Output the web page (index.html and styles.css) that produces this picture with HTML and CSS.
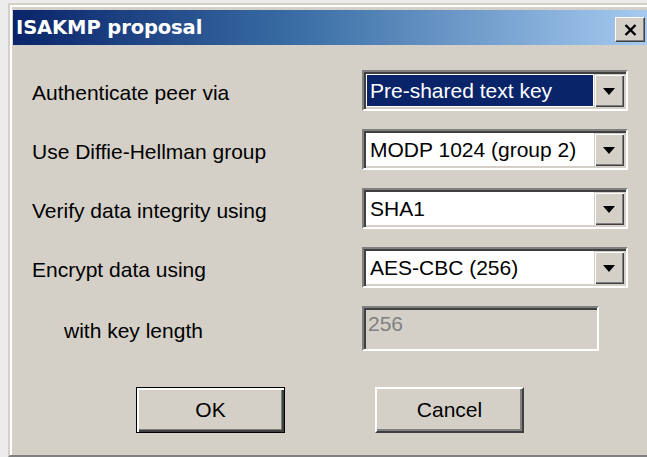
FILE: index.html
```html
<!DOCTYPE html>
<html lang="en">
<head>
<meta charset="utf-8">
<title>ISAKMP proposal</title>
<link rel="stylesheet" href="styles.css">
</head>
<body>
<div class="window">
  <div class="titlebar">
    <span class="title">ISAKMP proposal</span>
    <button class="close" type="button" aria-label="Close">
      <svg width="13" height="12" viewBox="0 0 13 12"><path d="M1.5 1 L11.5 11 M11.5 1 L1.5 11" stroke="#000" stroke-width="2.4" fill="none"/></svg>
    </button>
  </div>
  <div class="content">
    <div class="form">
      <div class="lbl">Authenticate peer via</div>
      <div class="combo">
        <span class="value selected">Pre-shared text key</span>
        <span class="drop"><svg width="12" height="7" viewBox="0 0 12 7"><path d="M0 0 H12 L6 7 Z" fill="#000"/></svg></span>
      </div>

      <div class="lbl">Use Diffie-Hellman group</div>
      <div class="combo">
        <span class="value">MODP 1024 (group 2)</span>
        <span class="drop"><svg width="12" height="7" viewBox="0 0 12 7"><path d="M0 0 H12 L6 7 Z" fill="#000"/></svg></span>
      </div>

      <div class="lbl">Verify data integrity using</div>
      <div class="combo">
        <span class="value">SHA1</span>
        <span class="drop"><svg width="12" height="7" viewBox="0 0 12 7"><path d="M0 0 H12 L6 7 Z" fill="#000"/></svg></span>
      </div>

      <div class="lbl">Encrypt data using</div>
      <div class="combo">
        <span class="value">AES-CBC (256)</span>
        <span class="drop"><svg width="12" height="7" viewBox="0 0 12 7"><path d="M0 0 H12 L6 7 Z" fill="#000"/></svg></span>
      </div>

      <div class="lbl indent">with key length</div>
      <div class="field disabled">256</div>
    </div>
    <div class="actions">
      <button class="btn default" type="button">OK</button>
      <button class="btn" type="button">Cancel</button>
    </div>
  </div>
</div>
</body>
</html>
```

FILE: styles.css
```css
html, body {
  margin: 0;
  height: 100%;
  overflow: hidden;
}

body {
  background: #ececec;
  font-family: "Liberation Sans", Arial, sans-serif;
  font-size: 21px;
  color: #000;
}

/* classic dialog frame */
.window {
  margin: 3px 0 0 8px;
  width: 644px;
  box-sizing: border-box;
  background: #d4d0c8;
  border-top: 2px solid #d4d0c8;
  border-left: 2px solid #d4d0c8;
  border-right: 2px solid #808080;
  border-bottom: 2px solid #808080;
  box-shadow: inset 2px 2px #ffffff;
  padding: 5px 3px 0 3px;
}

.titlebar {
  height: 35px;
  display: flex;
  align-items: center;
  justify-content: space-between;
  padding: 0 2px 0 3px;
  background: linear-gradient(to right, #0a246a 0%, #3a6ea5 45%, #a6caf0 100%);
}

.title {
  font-family: "DejaVu Sans", Tahoma, sans-serif;
  font-weight: bold;
  font-size: 19.5px;
  color: #fff;
  letter-spacing: -0.1px;
}

.close {
  width: 30px;
  height: 25px;
  margin-top: 4px;
  padding: 0;
  display: flex;
  align-items: center;
  justify-content: center;
  background: #d4d0c8;
  border: 1px solid;
  border-color: #ffffff #404040 #404040 #ffffff;
  box-shadow: inset -1px -1px #808080;
}

.content {
  padding: 25px 0 22px 19px;
}

.form {
  display: grid;
  grid-template-columns: 330px 266px;
  row-gap: 18px;
  align-items: center;
}

.lbl {
  padding-top: 5px;
  white-space: nowrap;
}

.lbl.indent {
  padding-left: 32px;
}

/* sunken 3D edge shared by combo boxes and edit fields */
.combo,
.field {
  box-sizing: border-box;
  border: 2px solid;
  border-color: #808080 #ffffff #ffffff #808080;
  box-shadow: inset 2px 2px #404040, inset -2px -2px #d4d0c8;
}

.combo {
  height: 41px;
  display: flex;
  align-items: stretch;
  padding: 2px;
  background: #fff;
}

.value {
  flex: 1;
  margin: 1px;
  padding: 1px 0 0 3px;
  display: flex;
  align-items: center;
  white-space: nowrap;
}

.value.selected {
  background: #0a246a;
  color: #fff;
}

.drop {
  width: 30px;
  display: flex;
  align-items: center;
  justify-content: center;
  background: #d4d0c8;
  box-shadow: inset 1px 1px #d4d0c8, inset 2px 2px #ffffff,
              inset -1px -1px #404040, inset -2px -2px #808080;
}

.drop svg {
  margin-top: 1px;
}

.field {
  width: 237px;
  height: 45px;
  padding: 4px 0 0 4px;
  background: #fff;
}

.field.disabled {
  background: #d4d0c8;
  color: #808080;
}

.actions {
  display: flex;
  gap: 90px;
  padding-left: 104px;
  margin-top: 36px;
}

.btn {
  width: 149px;
  height: 46px;
  padding: 0;
  font: inherit;
  color: #000;
  background: #d4d0c8;
  border: 2px solid;
  border-color: #ffffff #404040 #404040 #ffffff;
  box-shadow: inset -2px -2px #808080;
}

.btn.default {
  border: 1px solid #000;
  box-shadow: inset 2px 2px #ffffff, inset -2px -2px #404040, inset -3px -3px #808080;
}
```
